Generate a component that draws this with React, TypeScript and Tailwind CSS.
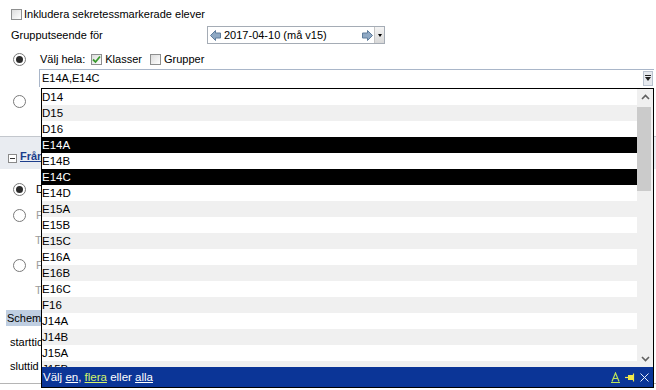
import React from 'react'

const items = [
  'D14', 'D15', 'D16', 'E14A', 'E14B', 'E14C', 'E14D', 'E15A', 'E15B',
  'E15C', 'E16A', 'E16B', 'E16C', 'F16', 'J14A', 'J14B', 'J15A', 'J15B',
]
const selected = ['E14A', 'E14C']

const Checkbox: React.FC<{ checked?: boolean }> = ({ checked }) => (
  <div className="relative w-[11px] h-[11px] border border-[#8e8f8f] bg-gradient-to-br from-[#dcdcdc] to-white shrink-0">
    {checked && (
      <svg className="absolute left-[0px] top-[0px]" width="9" height="9" viewBox="0 0 9 9">
        <path d="M1 4.5 L3.5 7 L8 1.5" stroke="#3a9a2e" strokeWidth="1.8" fill="none" />
      </svg>
    )}
  </div>
)

const Radio: React.FC<{ checked?: boolean }> = ({ checked }) => (
  <div className="flex items-center justify-center w-[13px] h-[13px] rounded-full border border-[#7a7a7a] bg-white shrink-0">
    {checked && <div className="w-[7px] h-[7px] rounded-full bg-[#2b2b2b]" />}
  </div>
)

const ArrowLeft = () => (
  <svg width="11" height="11" viewBox="0 0 11 11">
    <path d="M0.5 5.5 L5.5 0.5 L5.5 3 L10.5 3 L10.5 8 L5.5 8 L5.5 10.5 Z" fill="#8fa9c4" stroke="#5f7d9c" />
  </svg>
)

const ArrowRight = () => (
  <svg width="11" height="11" viewBox="0 0 11 11">
    <path d="M10.5 5.5 L5.5 0.5 L5.5 3 L0.5 3 L0.5 8 L5.5 8 L5.5 10.5 Z" fill="#8fa9c4" stroke="#5f7d9c" />
  </svg>
)

const Chevron: React.FC<{ up?: boolean }> = ({ up }) => (
  <svg width="9" height="6" viewBox="0 0 9 6">
    <path d={up ? 'M1 5 L4.5 1.5 L8 5' : 'M1 1 L4.5 4.5 L8 1'} stroke="#606060" strokeWidth="1.6" fill="none" />
  </svg>
)

export default function App() {
  return (
    <div className="relative w-[656px] h-[390px] overflow-hidden bg-white text-[11px] leading-[13px] text-black font-['Liberation_Sans',Arial,sans-serif]">
      {/* form behind the popup */}
      <div className="flex flex-col">
        <div className="mt-[7px] h-[14px] pl-[11px] flex items-center gap-[2px]">
          <Checkbox />
          <span>Inkludera sekretessmarkerade elever</span>
        </div>

        <div className="mt-[5px] h-[18px] pl-[11px] flex items-center">
          <span className="w-[196px]">Grupputseende för</span>
          <div className="flex items-center w-[178px] h-[18px] border border-[#a5acb5] bg-white">
            <div className="ml-[2px] mr-[3px] flex items-center"><ArrowLeft /></div>
            <span className="flex-1">2017-04-10 (må v15)</span>
            <div className="mr-[1px] flex items-center"><ArrowRight /></div>
            <div className="w-[10px] h-[16px] bg-gradient-to-b from-[#f4f4f4] to-[#d8d8d8] border-l border-[#c5c5c5] flex items-center justify-center">
              <div className="w-0 h-0 border-l-[2.5px] border-r-[2.5px] border-t-[3px] border-l-transparent border-r-transparent border-t-black" />
            </div>
          </div>
        </div>

        <div className="mt-[7px] h-[16px] pl-[13px] flex items-center">
          <Radio checked />
          <span className="ml-[14px]">Välj hela:</span>
          <div className="ml-[6px] flex items-center gap-[3px]">
            <Checkbox checked />
            <span>Klasser</span>
          </div>
          <div className="ml-[8px] flex items-center gap-[3px]">
            <Checkbox />
            <span>Grupper</span>
          </div>
        </div>

        <div className="mt-[2px] ml-[39px] w-[615px] h-[18px] border-t border-l border-[#a9b6c9] bg-white flex items-center">
          <span className="pl-[2px] flex-1">E14A,E14C</span>
          <div className="mr-[1px] w-[10px] h-[15px] bg-[#e6e9ee] border border-[#b9c2cf] flex items-center justify-center">
            <svg width="6" height="7" viewBox="0 0 6 7">
              <path d="M0 0.5 H6" stroke="#222" />
              <path d="M0 2 L3 6 L6 2 Z" fill="#222" />
            </svg>
          </div>
        </div>

        <div className="mt-[6px] h-[16px] pl-[13px] flex items-center">
          <Radio />
        </div>

        <div className="mt-[27px] h-[33px] border-t border-[#c3c7cd] bg-[#e9ecf1] flex items-end pb-[6px] pl-[8px]">
          <div className="w-[9px] h-[9px] border border-[#8a8a8a] bg-white flex items-center justify-center">
            <div className="w-[5px] h-[1px] bg-[#333]" />
          </div>
          <span className="ml-[3px] font-bold text-[#1d3e8c] underline">Från</span>
        </div>

        <div className="mt-[12px] h-[16px] pl-[13px] flex items-center">
          <Radio checked />
          <span className="ml-[10px]">D</span>
        </div>
        <div className="mt-[10px] h-[16px] pl-[13px] flex items-center">
          <Radio />
          <span className="ml-[10px] text-[#9b9b9b]">F</span>
        </div>
        <div className="mt-[9px] h-[16px] pl-[35px] flex items-center text-[#9b9b9b]">T</div>
        <div className="mt-[9px] h-[16px] pl-[13px] flex items-center">
          <Radio />
          <span className="ml-[10px] text-[#9b9b9b]">F</span>
        </div>
        <div className="mt-[9px] h-[16px] pl-[35px] flex items-center text-[#9b9b9b]">T</div>

        <div className="mt-[12px] ml-[6px] w-[40px] h-[16px] bg-[#bfcee1] flex items-center pl-[1px]">Schema</div>
        <div className="mt-[8px] h-[16px] pl-[10px] flex items-center">starttid</div>
        <div className="mt-[8px] h-[16px] pl-[10px] flex items-center">sluttid</div>
        <div className="mt-[9px] h-0 border-t border-[#b5b5b5]" />
      </div>

      {/* dropdown popup */}
      <div className="absolute left-[41px] top-[88px] w-[613px] h-[300px] border border-black bg-white flex flex-col">
        <div className="flex h-[278px]">
          <div className="flex-1 overflow-hidden">
            {items.map((item, i) => {
              const isSel = selected.includes(item)
              const bg = isSel ? 'bg-black text-white' : i % 2 === 1 ? 'bg-[#f0f0f0]' : 'bg-white'
              return (
                <div key={item} className={`h-[16px] leading-[16px] text-[11.5px] ${bg}`}>
                  {item}
                </div>
              )
            })}
          </div>
          <div className="w-[16px] bg-[#f0f0f0] flex flex-col">
            <div className="h-[16px] flex items-center justify-center"><Chevron up /></div>
            <div className="mt-[2px] w-[14px] h-[84px] bg-[#cbcbcb]" />
            <div className="flex-1" />
            <div className="h-[16px] flex items-center justify-center"><Chevron /></div>
          </div>
        </div>
        <div className="h-[20px] bg-[#0b3597] flex items-center pl-[1px] text-white text-[11.5px]">
          <span>
            Välj <span className="underline">en</span>, <span className="underline text-[#d4f26a]">flera</span> eller <span className="underline">alla</span>
          </span>
          <div className="flex-1" />
          <div className="flex items-center gap-[5px] pr-[4px]">
            <svg width="9" height="11" viewBox="0 0 9 11">
              <path d="M1 9.5 L4.5 1 L8 9.5 M2.5 6.5 H6.5" stroke="#b9e35a" strokeWidth="1.2" fill="none" />
              <path d="M0 10.5 H9" stroke="#b9e35a" />
            </svg>
            <svg width="10" height="9" viewBox="0 0 10 9">
              <path d="M0 4.5 H3" stroke="#f1e64a" strokeWidth="1.2" />
              <rect x="3" y="2" width="5" height="5" fill="#f1e64a" />
              <path d="M8.5 0.5 V8.5" stroke="#f1e64a" strokeWidth="1.2" />
            </svg>
            <svg width="9" height="9" viewBox="0 0 9 9">
              <path d="M0.5 0.5 L8.5 8.5 M8.5 0.5 L0.5 8.5" stroke="#e6eefc" strokeWidth="1" />
            </svg>
          </div>
        </div>
      </div>
    </div>
  )
}
